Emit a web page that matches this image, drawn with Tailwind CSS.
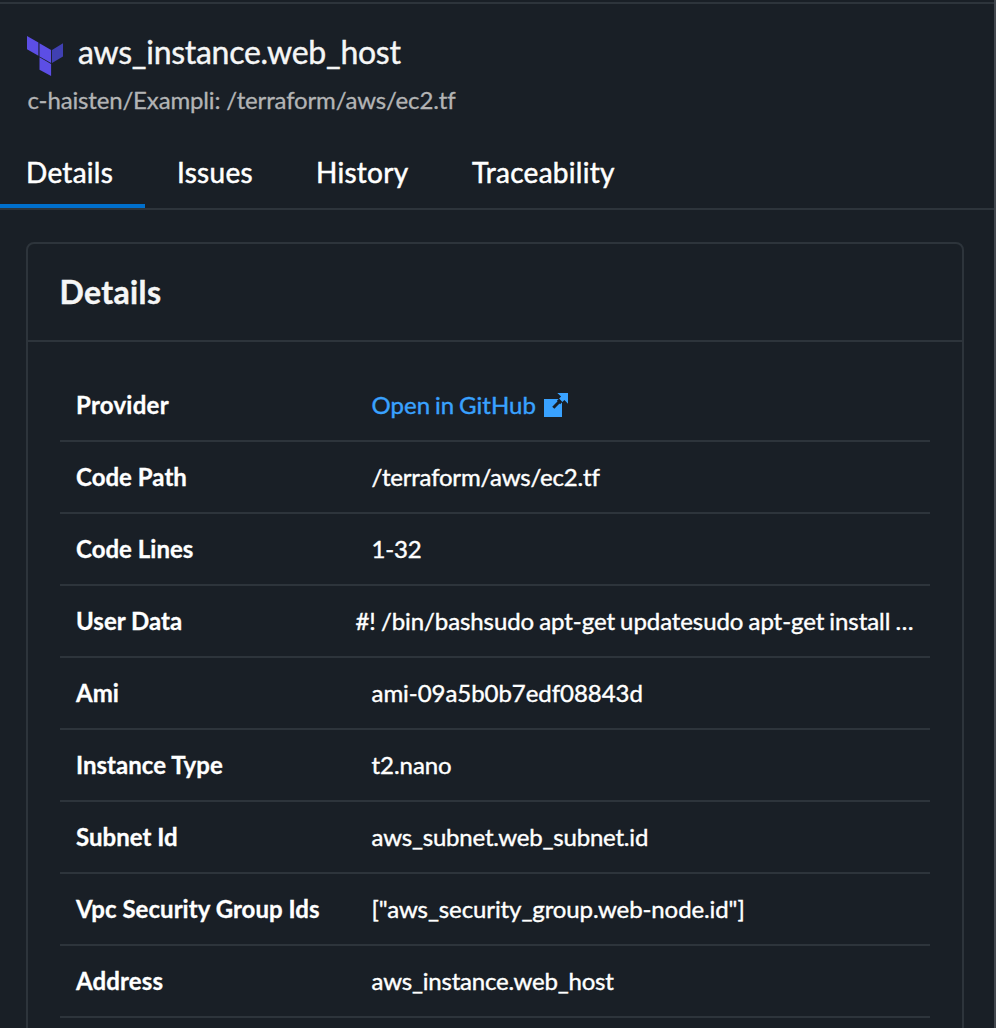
<!DOCTYPE html>
<html lang="en">
<head>
<meta charset="utf-8">
<title>aws_instance.web_host</title>
<script src="https://cdn.jsdelivr.net/npm/@tailwindcss/browser@4"></script>
</head>
<body class="bg-[#191f26]">
<div class="flex h-[1028px] w-[996px] flex-col overflow-hidden border-r-2 border-[#42474e] bg-[#191f26] pt-0.5 font-['Lato',sans-serif] text-2xl text-white antialiased">
  <header class="flex h-[134px] shrink-0 flex-col border-t-2 border-[#2d343b] pl-[27px]">
    <div class="mt-7 flex h-10 items-center">
      <svg class="mt-2 h-10 w-9 shrink-0" viewBox="0 0 36 40">
        <path fill="#5c4ee5" d="M0 0l11.4 6.6v13.2L0 13.2zM12.5 7.2l11.6 6.7v13.2l-11.6-6.7zM12.5 21.3l11.6 6.6V40l-11.6-6.3z"/>
        <path fill="#4040b2" d="M25 13.9l11-6.6v13.1l-11 6.6z"/>
      </svg>
      <h1 class="ml-[15px] text-[32px] leading-10 tracking-[-0.28px] whitespace-nowrap text-[#f5f6f6] [-webkit-text-stroke:0.4px]">aws_instance.web_host</h1>
    </div>
    <p class="mt-3 pl-[0.5px] leading-8 tracking-[-0.15px] whitespace-nowrap text-[#b3b4b5] [-webkit-text-stroke:0.3px]">c-haisten/Exampli: /terraform/aws/ec2.tf</p>
  </header>
  <nav class="flex h-[74px] shrink-0 border-b-2 border-[#2d343b] text-[28px] leading-[72px] tracking-[0.28px] [-webkit-text-stroke:0.5px]">
    <a class="h-[72px] w-[145px] border-b-4 border-[#006fcc] pl-[26px]">Details</a>
    <a class="ml-8 w-[139px]">Issues</a>
    <a class="w-[156px]">History</a>
    <a>Traceability</a>
  </nav>
  <main class="mt-8 ml-[26px] flex h-[900px] w-[938px] shrink-0 flex-col rounded-t-lg border-2 border-[#2d343b]">
    <h2 class="h-[98px] shrink-0 border-b-2 border-[#2d343b] pl-[31.5px] text-[32px] leading-[95px] font-bold tracking-[0.35px] text-[#f5f6f6] [-webkit-text-stroke:0.4px]">Details</h2>
    <dl class="mx-8 mt-7 leading-[70px] whitespace-nowrap *:flex *:h-[72px] *:border-b-2 *:border-[#2d343b] *:pl-4 [&_dd]:tracking-[-0.2px] [&_dd]:[-webkit-text-stroke:0.4px] [&_dt]:tracking-[0.03px] [&_dt]:[-webkit-text-stroke:0.3px]">
      <div><dt class="w-[295.5px] font-bold tracking-[0.25px]!">Provider</dt><dd class="flex items-center tracking-[0.03px]! [word-spacing:-1.3px] text-[#39a2ff]">Open in GitHub
        <svg class="ml-2 size-6" viewBox="0 0 24 24"><path fill="#39a2ff" d="M0 6h18v18H0z"/><path stroke="#191f26" stroke-width="4.6" d="M14.5 9.5l5-5"/><path stroke="#191f26" stroke-width="3" d="M9.3 14.7L16 8"/><path fill="#39a2ff" d="M13.3 0H24v10.7l-3.6-3.8-2 2-3.3-3.3 2-2z"/></svg></dd></div>
      <div><dt class="w-[295.5px] font-bold">Code Path</dt><dd>/terraform/aws/ec2.tf</dd></div>
      <div><dt class="w-[295.5px] font-bold">Code Lines</dt><dd>1-32</dd></div>
      <div><dt class="w-[279.5px] font-bold">User Data</dt><dd class="tracking-[-0.08px]! [word-spacing:-0.9px]">#! /bin/bashsudo apt-get updatesudo apt-get install …</dd></div>
      <div><dt class="w-[295.5px] font-bold">Ami</dt><dd class="tracking-[-0.05px]!">ami-09a5b0b7edf08843d</dd></div>
      <div><dt class="w-[295.5px] font-bold">Instance Type</dt><dd class="tracking-[-0.05px]!">t2.nano</dd></div>
      <div><dt class="w-[295.5px] font-bold">Subnet Id</dt><dd>aws_subnet.web_subnet.id</dd></div>
      <div><dt class="w-[295.5px] font-bold">Vpc Security Group Ids</dt><dd class="tracking-[-0.1px]!">["aws_security_group.web-node.id"]</dd></div>
      <div><dt class="w-[295.5px] font-bold tracking-[0.15px]!">Address</dt><dd>aws_instance.web_host</dd></div>
    </dl>
  </main>
</div>
</body>
</html>
